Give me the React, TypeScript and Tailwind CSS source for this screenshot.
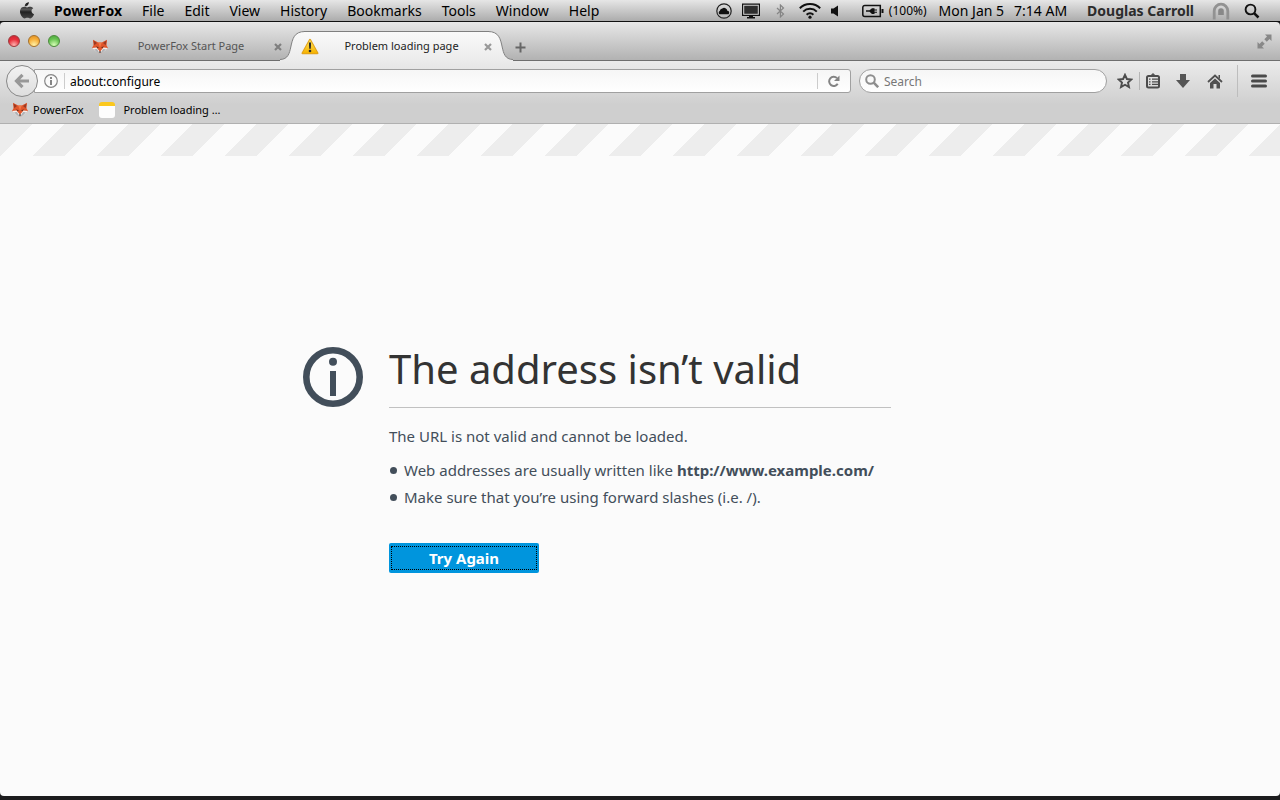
import React from "react";

const MENUS = ["File", "Edit", "View", "History", "Bookmarks", "Tools", "Window", "Help"];

function AppleLogo() {
  return (
    <svg width="16" height="18" viewBox="0 0 16 18" aria-hidden="true">
      <defs>
        <linearGradient id="apple" x1="0" y1="0" x2="0" y2="1">
          <stop offset="0" stopColor="#111" />
          <stop offset="0.45" stopColor="#555" />
          <stop offset="0.6" stopColor="#222" />
          <stop offset="1" stopColor="#444" />
        </linearGradient>
      </defs>
      <path
        fill="url(#apple)"
        d="M10.9.3c.1 1.100-.3 2.100-.95 2.850-.7.800-1.700 1.300-2.600 1.200-.1-1 .35-2.050.95-2.750C9 .85 10.100.35 10.900.3zM13.300 9.100c0-1.900 1.500-2.750 1.600-2.850-.9-1.300-2.300-1.450-2.750-1.500-1.150-.1-2.250.7-2.850.7-.6 0-1.500-.65-2.450-.65C5.550 4.800 4.350 5.550 3.700 6.700c-1.400 2.350-.35 5.900 1 7.800.65.95 1.400 2 2.450 1.950.95-.05 1.350-.65 2.500-.65s1.500.65 2.500.6c1.050 0 1.700-.9 2.350-1.850.75-1.100 1.050-2.100 1.050-2.200-.05 0-2.250-.9-2.250-3.250z"
        transform="matrix(1.120 0 0 1 -2.400 0)"
      />
    </svg>
  );
}

function Fox() {
  return (
    <svg width="16" height="16" viewBox="0 0 16 16" aria-hidden="true">
      <path d="M1 .8 6.200 3.600h3.600L15 .8l-.5 5.400L16 9l-3.500 2.500L9.500 14 8 15l-1.500-1-3-2.500L0 9l1.500-2.800z" fill="#e1562b" />
      <path d="M1.500 1.500 5 4 2.300 6.200zM14.500 1.500 11 4l2.700 2.200z" fill="#9c3a22" />
      <path d="M0 9l4.500-.6L7 11.500l1 1.500 1-1.500 2.500-3.100L16 9l-3.500 3L8 15 3.500 12z" fill="#f1eeec" />
      <path d="m2 10.300 3-.3 1.500 2.500L8 15l-3.500-2.300zM14 10.300l-3-.3-1.500 2.500L8 15l3.500-2.300z" fill="#aeb2b6" />
      <path d="m4 7.200 2.600 1.100-.6 1zM12 7.200 9.400 8.300l.6 1zM6.800 12.500h2.400L8 14.500z" fill="#33241f" />
      <path d="M6.200 3.600h3.600L8 8.500z" fill="#f27a48" />
    </svg>
  );
}

function Warning() {
  return (
    <svg width="18" height="18" viewBox="0 0 18 18" aria-hidden="true">
      <defs>
        <linearGradient id="warn" x1="0" y1="0" x2="0" y2="1">
          <stop offset="0" stopColor="#ffe45c" />
          <stop offset="1" stopColor="#f6b300" />
        </linearGradient>
      </defs>
      <path d="M9 1.800 16.500 15.200H1.500z" fill="url(#warn)" stroke="#dfa01c" strokeWidth="2" strokeLinejoin="round" />
      <path d="M9 1.800 16.500 15.200H1.500z" fill="url(#warn)" />
      <path d="M7.900 4.500h2.200l-.3 6.200H8.200z" fill="#2a2a2a" />
      <circle cx="9" cy="13" r="1.300" fill="#2a2a2a" />
    </svg>
  );
}

function CloseIcon() {
  return (
    <svg width="8" height="8" viewBox="0 0 8 8" aria-hidden="true">
      <path d="m1 1 6 6M7 1 1 7" stroke="currentColor" strokeWidth="2.200" />
    </svg>
  );
}

function MenuBar() {
  return (
    <header className="flex h-[22px] shrink-0 items-center border-b border-[#111] bg-linear-to-b from-[#e6e6e6] to-[#acacac] pl-[19px] pr-5 text-[14px] leading-[20px] whitespace-nowrap text-black">
      <AppleLogo />
      <nav className="ml-[19px] flex flex-1 gap-5" aria-label="Menu bar">
        <strong>PowerFox</strong>
        {MENUS.map((m) => (
          <span key={m}>{m}</span>
        ))}
      </nav>
      <div className="flex items-center">
        <svg width="16" height="16" viewBox="0 0 16 16" aria-hidden="true">
          <circle cx="8" cy="8" r="7.200" fill="none" stroke="#222" strokeWidth="1.200" />
          <path d="M3.500 11.200a2 2 0 0 1 .4-3.400 2.600 2.600 0 0 1 2.400-2.400 3.200 3.200 0 0 1 5 2.400 1.900 1.900 0 0 1 1.200 3.400z" fill="#111" />
        </svg>
        <svg className="ml-[10px]" width="18" height="16" viewBox="0 0 18 16" aria-hidden="true">
          <path d="M.6 1.100h16.800v11.300H.6z" fill="#ddd" stroke="#111" strokeWidth="1.200" />
          <path d="M2.200 2.700h13.600v8.100H2.200z" fill="#2e2e2e" />
          <path d="M7 12.500h4v1.500h2V15.500H5V14h2z" fill="#111" />
        </svg>
        <svg className="ml-4" width="9" height="14" viewBox="0 0 9 14" fill="none" aria-hidden="true">
          <path d="m1 4 6.500 6L4.400 13V1l3.100 3L1 10" stroke="#858585" strokeWidth="1.200" />
        </svg>
        <svg className="ml-[14px]" width="22" height="16" viewBox="0 0 22 16" fill="none" stroke="#111" strokeWidth="2" aria-hidden="true">
          <path d="M.8 5.300a14.500 14.500 0 0 1 20.400 0M4.200 8.600a9.700 9.700 0 0 1 13.600 0M7.600 11.700a5 5 0 0 1 6.800 0" />
          <circle cx="11" cy="14.200" r="1.600" fill="#111" stroke="none" />
        </svg>
        <svg className="ml-[9px]" width="9" height="12" viewBox="0 0 9 12" aria-hidden="true">
          <path d="M1 3.500h2.500L8 .5v11L3.500 8.500H1z" fill="#111" />
        </svg>
        <svg className="ml-[22px]" width="23" height="14" viewBox="0 0 23 14" fill="none" aria-hidden="true">
          <path d="M6 1.500H3.800a2 2 0 0 0-2 2v7a2 2 0 0 0 2 2h15.500v-11z" stroke="#111" strokeWidth="1.500" />
          <path d="M20.500 5h2v4h-2z" fill="#111" />
          <path d="M5 6.300h3.500L11 4.200h2.500V5.500H16v1h-2.500v1.200H16v1h-2.500V10H11L8.500 7.800H5z" fill="#111" />
        </svg>
        <span className="ml-[5px] text-[12px]">(100%)</span>
        <time className="ml-3 flex gap-[10px]">
          <span>Mon Jan 5</span>
          <span>7:14 AM</span>
        </time>
        <strong className="ml-5 text-[#2c2c2c]">Douglas Carroll</strong>
        <svg className="ml-[18px]" width="18" height="18" viewBox="0 0 18 18" fill="none" aria-hidden="true">
          <path d="M2.200 17.500V9a6.800 6.800 0 0 1 13.600 0v8.500" stroke="#929292" strokeWidth="2.800" />
          <path d="M6.200 13V9a2.800 2.800 0 0 1 5.600 0v4z" fill="#888" />
        </svg>
        <svg className="ml-[14px]" width="16" height="16" viewBox="0 0 16 16" fill="none" stroke="#111" aria-hidden="true">
          <circle cx="6.500" cy="6.500" r="4.900" strokeWidth="1.900" />
          <path d="m9.800 9.800 4.700 4.700" strokeWidth="2.500" />
        </svg>
      </div>
    </header>
  );
}

function WindowControls() {
  return (
    <div className="flex gap-2">
      <button aria-label="Close window" className="size-3 rounded-full border border-[#9d3a3d] bg-[radial-gradient(circle_at_50%_90%,#ffb3b0,#e8303c_55%,#c92432)]" />
      <button aria-label="Minimize window" className="size-3 rounded-full border border-[#a5702a] bg-[radial-gradient(circle_at_50%_90%,#fff3a8,#f6ac36_60%,#dd8d22)]" />
      <button aria-label="Zoom window" className="size-3 rounded-full border border-[#4b8a3c] bg-[radial-gradient(circle_at_50%_90%,#d8ffb8,#66c250_60%,#4aa53c)]" />
    </div>
  );
}

function TabEdge({ flip = false }: { flip?: boolean }) {
  return (
    <svg width="25" height="30" viewBox="0 0 25 30" className={flip ? "-scale-x-100" : ""} aria-hidden="true">
      <defs>
        <linearGradient id="tabfill" x1="0" y1="0" x2="0" y2="1">
          <stop offset="0" stopColor="#fafafa" />
          <stop offset="1" stopColor="#ebebeb" />
        </linearGradient>
      </defs>
      <path d="M0 28.500C8 28.500 9.500 22 10.800 16 12.500 8 14 .5 25 .5V30H0z" fill="url(#tabfill)" />
      <path d="M0 28.500C8 28.500 9.500 22 10.800 16 12.500 8 14 .5 25 .5" fill="none" stroke="#808080" />
    </svg>
  );
}

function TabStrip() {
  return (
    <div className="flex h-[39px] items-end border-b border-[#6e6e6e] bg-linear-to-b from-[#e8e8e8] to-[#b2b2b2] pl-2">
      <div className="self-center">
        <WindowControls />
      </div>
      <div className="ml-8 flex h-[27px] w-[188px] items-center text-[11px] text-[#555]">
        <Fox />
        <span className="flex-1 text-center whitespace-nowrap">PowerFox Start Page</span>
        <button aria-label="Close PowerFox Start Page" className="-mr-[2px] text-[#7f7f7f]">
          <CloseIcon />
        </button>
      </div>
      <div className="-mb-px flex h-[30px]">
        <TabEdge />
        <div className="z-10 -mx-px flex w-[185px] items-center border-t border-[#808080] bg-linear-to-b from-[#fafafa] to-[#ebebeb] text-[11px] text-[#222]">
          <div className="-mx-[3px] flex flex-1 items-center">
            <Warning />
            <span className="flex-1 text-center whitespace-nowrap">Problem loading page</span>
            <button aria-label="Close Problem loading page" className="text-[#999]">
              <CloseIcon />
            </button>
          </div>
        </div>
        <TabEdge flip />
      </div>
      <button aria-label="New tab" className="mb-[7px] ml-[2px]">
        <svg width="11" height="11" viewBox="0 0 11 11" aria-hidden="true">
          <path d="M5.500.5v10M.5 5.500h10" stroke="#666" strokeWidth="2" />
        </svg>
      </button>
      <button aria-label="Full screen" className="mr-2 ml-auto self-center">
        <svg width="15" height="15" viewBox="0 0 15 15" fill="#888" aria-hidden="true">
          <path d="M8 .5h6.500V7l-2-2-2.700 2.700L7.300 5.200 10 2.500zM7 14.500H.5V8l2 2 2.700-2.700 2.500 2.500L5 12.500z" />
        </svg>
      </button>
    </div>
  );
}

function NavBar() {
  return (
    <div className="flex h-10 items-center pr-[13px] pl-[6px]">
      <button aria-label="Back" className="z-10 grid size-8 shrink-0 place-items-center rounded-full border border-[#888] bg-linear-to-b from-[#f2f2f2] to-[#dedede]">
        <svg width="16" height="16" viewBox="0 0 16 16" fill="none" stroke="#989898" strokeWidth="3.200" aria-hidden="true">
          <path d="M15 8H3M8.500 1.800 2.500 8l6 6.200" />
        </svg>
      </button>
      <div className="-ml-1 flex h-6 flex-1 items-center rounded-r-[3px] border border-[#a0a0a0] bg-linear-to-b from-[#f6f6f6] to-white pl-[9px]">
        <svg width="14" height="14" viewBox="0 0 14 14" fill="none" aria-hidden="true">
          <circle cx="7" cy="7" r="6.300" stroke="#858585" strokeWidth="1.200" />
          <path d="M6 3h2v2H6zM6 6h2v5H6z" fill="#858585" />
        </svg>
        <span className="ml-[6px] h-4 w-px bg-[#ccc]" />
        <input aria-label="Address" defaultValue="about:configure" className="h-full min-w-0 flex-1 bg-transparent pl-[5px] text-[12px] text-black outline-none" />
        <span className="h-4 w-px bg-[#ccc]" />
        <button aria-label="Reload" className="grid h-full w-8 place-items-center">
          <svg width="12" height="12" viewBox="0 0 12 12" aria-hidden="true">
            <path d="M9.700 8.800A4.600 4.600 0 1 1 9 3.100" fill="none" stroke="#848484" strokeWidth="2" />
            <path d="M11.500.5v5.500H6z" fill="#848484" />
          </svg>
        </button>
      </div>
      <label className="ml-2 flex h-6 w-[248px] items-center rounded-full border border-[#a0a0a0] bg-linear-to-b from-[#f6f6f6] to-white pl-[5px]">
        <svg width="14" height="14" viewBox="0 0 14 14" fill="none" stroke="#8e8e8e" aria-hidden="true">
          <circle cx="5.500" cy="5.500" r="4.300" strokeWidth="2" />
          <path d="m8.700 8.700 4.500 4.500" strokeWidth="2.600" />
        </svg>
        <input aria-label="Search" placeholder="Search" className="h-full min-w-0 flex-1 bg-transparent pl-[5px] text-[12px] outline-none placeholder:text-[#777]" />
      </label>
      <button aria-label="Bookmark this page" className="ml-[10px]">
        <svg width="16" height="16" viewBox="0 0 16 16" fill="none" stroke="#4c4c4c" strokeWidth="1.900" aria-hidden="true">
          <path d="m8 1.800 1.900 4.200 4.500.5-3.400 3 1 4.600L8 11.800l-4 2.300 1-4.600-3.400-3 4.500-.5z" />
        </svg>
      </button>
      <span className="ml-[6px] h-[18px] w-px bg-[#b5b5b5]" />
      <button aria-label="Show bookmarks" className="ml-[6px]">
        <svg width="14" height="16" viewBox="0 0 14 16" aria-hidden="true">
          <path d="M4.500 3 7 .5 9.500 3z" fill="#4c4c4c" stroke="#4c4c4c" />
          <rect x="1" y="3" width="12" height="11.500" rx="1.500" fill="none" stroke="#4c4c4c" strokeWidth="2" />
          <path d="M3 6.200h1.500M6 6.200h6M3 8.800h1.500M6 8.800h6M3 11.400h1.500M6 11.400h6" stroke="#4c4c4c" strokeWidth="1.300" />
        </svg>
      </button>
      <button aria-label="Downloads" className="ml-4">
        <svg width="14" height="14" viewBox="0 0 14 14" aria-hidden="true">
          <path d="M4 0h6v6h4l-7 8-7-8h4z" fill="#555" />
        </svg>
      </button>
      <button aria-label="Home" className="ml-[17px]">
        <svg width="16" height="15" viewBox="0 0 16 15" aria-hidden="true">
          <path d="m1 8 7-6.500L15 8" fill="none" stroke="#505050" strokeWidth="1.800" />
          <path d="M11.500 1H13v4l-1.500-1.500zM8 4.500l5 4.600V14.500H9.500V10h-3v4.500H3V9.100z" fill="#505050" />
        </svg>
      </button>
      <span className="ml-[14px] h-8 w-px bg-[#bdbdbd]" />
      <button aria-label="Open menu" className="ml-[13px]">
        <svg width="16" height="14" viewBox="0 0 16 14" aria-hidden="true">
          <path d="M1.500 2h13M1.500 7h13M1.500 12h13" stroke="#4a4a4a" strokeWidth="3" strokeLinecap="round" />
        </svg>
      </button>
    </div>
  );
}

function BookmarksBar() {
  return (
    <div className="flex h-[22px] items-center gap-4 pb-[4px] pl-3 text-[11px] leading-[16px] text-black">
      <a href="#powerfox" className="flex items-center gap-[5px]">
        <Fox />
        PowerFox
      </a>
      <a href="#problem" className="flex items-center gap-2">
        <span className="h-4 w-4 overflow-hidden rounded-[3px] bg-linear-to-b from-[#fbc81e] from-25% to-[#fdfdfd] to-25%" />
        Problem loading …
      </a>
    </div>
  );
}

function ErrorPage() {
  return (
    <main className="relative flex flex-1 flex-col bg-[#fbfbfb]">
      <div className="absolute inset-x-0 top-0 h-8 bg-[linear-gradient(135deg,#ededed_25%,#fbfbfb_25%,#fbfbfb_50%,#ededed_50%,#ededed_75%,#fbfbfb_75%)] bg-[length:64px_64px]" />
      <div className="grid flex-1 grid-cols-[1fr_502px_1fr] content-center text-[15px] text-[#424e5a]">
        <svg className="mr-[26px] justify-self-end" width="60" height="60" viewBox="0 0 60 60" aria-hidden="true">
          <circle cx="30" cy="30" r="26.700" fill="none" stroke="#424e5a" strokeWidth="6.600" />
          <circle cx="30" cy="14.800" r="4" fill="#424e5a" />
          <path d="M27 24h6v25h-6z" fill="#424e5a" />
        </svg>
        <div>
          <h1 className="border-b border-[#c1c1c1] pb-4 text-[40px] leading-[44px] whitespace-nowrap text-[#333]">The address isn’t valid</h1>
          <p className="mt-4 leading-[24px]">The URL is not valid and cannot be loaded.</p>
          <ul className="mt-[9px] leading-[27px] whitespace-nowrap">
            <li className="flex items-center gap-[7px]">
              <span className="ml-px size-[7px] rounded-full bg-[#424e5a]" />
              <span>
                Web addresses are usually written like <strong>http://www.example.com/</strong>
              </span>
            </li>
            <li className="flex items-center gap-[7px]">
              <span className="ml-px size-[7px] rounded-full bg-[#424e5a]" />
              <span>Make sure that you’re using forward slashes (i.e. /).</span>
            </li>
          </ul>
          <button className="mt-8 block h-[30px] w-[150px] rounded-[2px] bg-[#0095dd] px-[2px] py-[3px] font-bold text-white">
            <span className="flex h-full items-center justify-center border border-dotted border-black">Try Again</span>
          </button>
        </div>
      </div>
    </main>
  );
}

export default function App() {
  return (
    <div className="flex min-h-screen flex-col bg-[#1c1c1e] pb-1 font-['Noto_Sans','Open_Sans',sans-serif]">
      <MenuBar />
      <div className="flex flex-1 flex-col overflow-hidden rounded-[4px]">
        <TabStrip />
        <div className="border-b border-[#b0b0b0] bg-linear-to-b from-[#ebebeb] to-[#cfcfcf] to-70%">
          <NavBar />
          <BookmarksBar />
        </div>
        <ErrorPage />
      </div>
    </div>
  );
}
